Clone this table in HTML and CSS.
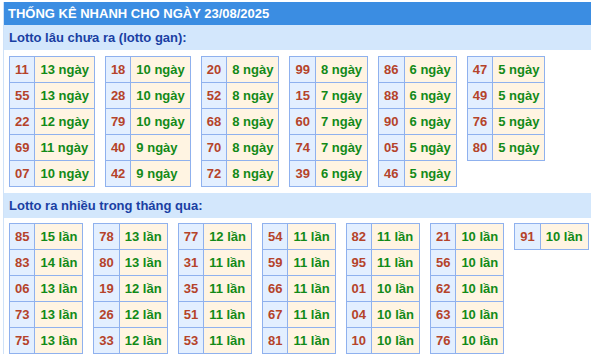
FILE: index.html
```html
<!DOCTYPE html>
<html lang="vi">
<head>
<meta charset="utf-8">
<link rel="stylesheet" href="styles.css">
</head>
<body>
<div class="wrap">
  <div class="title">THỐNG KÊ NHANH CHO NGÀY 23/08/2025</div>
  <div class="sub">Lotto lâu chưa ra (lotto gan):</div>
  <div class="tables">
    <table><tr><td class="n">11</td><td class="v">13 ngày</td></tr><tr><td class="n">55</td><td class="v">13 ngày</td></tr><tr><td class="n">22</td><td class="v">12 ngày</td></tr><tr><td class="n">69</td><td class="v">11 ngày</td></tr><tr><td class="n">07</td><td class="v">10 ngày</td></tr></table>
    <table><tr><td class="n">18</td><td class="v">10 ngày</td></tr><tr><td class="n">28</td><td class="v">10 ngày</td></tr><tr><td class="n">79</td><td class="v">10 ngày</td></tr><tr><td class="n">40</td><td class="v">9 ngày</td></tr><tr><td class="n">42</td><td class="v">9 ngày</td></tr></table>
    <table><tr><td class="n">20</td><td class="v">8 ngày</td></tr><tr><td class="n">52</td><td class="v">8 ngày</td></tr><tr><td class="n">68</td><td class="v">8 ngày</td></tr><tr><td class="n">70</td><td class="v">8 ngày</td></tr><tr><td class="n">72</td><td class="v">8 ngày</td></tr></table>
    <table><tr><td class="n">99</td><td class="v">8 ngày</td></tr><tr><td class="n">15</td><td class="v">7 ngày</td></tr><tr><td class="n">60</td><td class="v">7 ngày</td></tr><tr><td class="n">74</td><td class="v">7 ngày</td></tr><tr><td class="n">39</td><td class="v">6 ngày</td></tr></table>
    <table><tr><td class="n">86</td><td class="v">6 ngày</td></tr><tr><td class="n">88</td><td class="v">6 ngày</td></tr><tr><td class="n">90</td><td class="v">6 ngày</td></tr><tr><td class="n">05</td><td class="v">5 ngày</td></tr><tr><td class="n">46</td><td class="v">5 ngày</td></tr></table>
    <table><tr><td class="n">47</td><td class="v">5 ngày</td></tr><tr><td class="n">49</td><td class="v">5 ngày</td></tr><tr><td class="n">76</td><td class="v">5 ngày</td></tr><tr><td class="n">80</td><td class="v">5 ngày</td></tr></table>
  </div>
  <div class="sub sub2">Lotto ra nhiều trong tháng qua:</div>
  <div class="tables">
    <table><tr><td class="n">85</td><td class="v">15 lần</td></tr><tr><td class="n">83</td><td class="v">14 lần</td></tr><tr><td class="n">06</td><td class="v">13 lần</td></tr><tr><td class="n">73</td><td class="v">13 lần</td></tr><tr><td class="n">75</td><td class="v">13 lần</td></tr></table>
    <table><tr><td class="n">78</td><td class="v">13 lần</td></tr><tr><td class="n">80</td><td class="v">13 lần</td></tr><tr><td class="n">19</td><td class="v">12 lần</td></tr><tr><td class="n">26</td><td class="v">12 lần</td></tr><tr><td class="n">33</td><td class="v">12 lần</td></tr></table>
    <table><tr><td class="n">77</td><td class="v">12 lần</td></tr><tr><td class="n">31</td><td class="v">11 lần</td></tr><tr><td class="n">35</td><td class="v">11 lần</td></tr><tr><td class="n">51</td><td class="v">11 lần</td></tr><tr><td class="n">53</td><td class="v">11 lần</td></tr></table>
    <table><tr><td class="n">54</td><td class="v">11 lần</td></tr><tr><td class="n">59</td><td class="v">11 lần</td></tr><tr><td class="n">66</td><td class="v">11 lần</td></tr><tr><td class="n">67</td><td class="v">11 lần</td></tr><tr><td class="n">81</td><td class="v">11 lần</td></tr></table>
    <table><tr><td class="n">82</td><td class="v">11 lần</td></tr><tr><td class="n">95</td><td class="v">11 lần</td></tr><tr><td class="n">01</td><td class="v">10 lần</td></tr><tr><td class="n">04</td><td class="v">10 lần</td></tr><tr><td class="n">10</td><td class="v">10 lần</td></tr></table>
    <table><tr><td class="n">21</td><td class="v">10 lần</td></tr><tr><td class="n">56</td><td class="v">10 lần</td></tr><tr><td class="n">62</td><td class="v">10 lần</td></tr><tr><td class="n">63</td><td class="v">10 lần</td></tr><tr><td class="n">76</td><td class="v">10 lần</td></tr></table>
    <table><tr><td class="n">91</td><td class="v">10 lần</td></tr></table>
  </div>
</div>
</body>
</html>
```
FILE: styles.css
```css
html, body {
  margin: 0;
  padding: 0;
  background: #fff;
}
body {
  font-family: "Liberation Sans", Arial, sans-serif;
  font-weight: bold;
}
.wrap {
  margin: 2px 0 0 3px;
  border-left: 1px solid #cfe2f8;
  width: 600px;
}
.title {
  background: #3b8de2;
  color: #fff;
  font-size: 13px;
  height: 23px;
  line-height: 23px;
  padding-left: 4px;
}
.sub {
  background: #d3e7fc;
  color: #1a3fa3;
  font-size: 13px;
  height: 25px;
  line-height: 25px;
  padding-left: 5px;
}
.sub2 {
  margin-top: 6px;
}
.tables {
  display: flex;
  align-items: flex-start;
  gap: 10px;
  padding: 6px 0 0 5px;
}
.sub2 + .tables {
  padding-top: 5px;
}
table {
  border-collapse: collapse;
  font-size: 13px;
}
td {
  border: 1px solid #8fb1ee;
  height: 25px;
  padding: 0 5px;
  white-space: nowrap;
}
td.n {
  background: #e3efff;
  color: #b5432a;
}
td.v {
  background: #fff4e2;
  color: #128a18;
}
```
